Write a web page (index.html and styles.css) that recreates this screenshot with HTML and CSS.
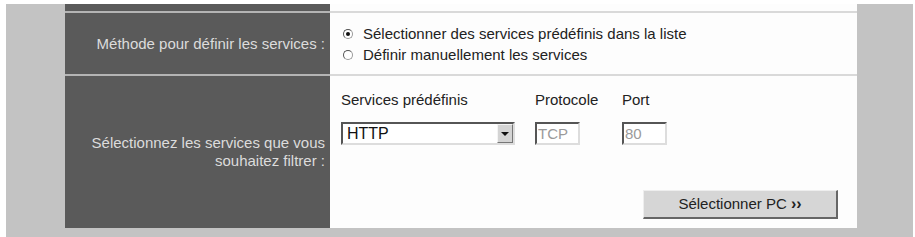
FILE: index.html
```html
<!DOCTYPE html>
<html lang="fr">
<head>
    <meta charset="UTF-8">
    <title>Filtrage des services</title>
    <link rel="stylesheet" href="styles.css">
</head>
<body>
    <div class="page">
        <div class="form">
            <div class="row row-top">
                <div class="lbl"></div>
                <div class="val"></div>
            </div>
            <div class="row row-method">
                <div class="lbl">Méthode pour définir les services :</div>
                <div class="val">
                    <label class="opt"><input type="radio" name="meth" checked> Sélectionner des services prédéfinis dans la liste</label>
                    <label class="opt"><input type="radio" name="meth"> Définir manuellement les services</label>
                </div>
            </div>
            <div class="row row-services">
                <div class="lbl">Sélectionnez les services que vous souhaitez filtrer :</div>
                <div class="val">
                    <div class="fields">
                        <div class="field f-svc">
                            <span class="cap">Services prédéfinis</span>
                            <span class="sel">
                                <select>
                                    <option>HTTP</option>
                                    <option>FTP</option>
                                    <option>SMTP</option>
                                </select>
                                <span class="arrow"></span>
                            </span>
                        </div>
                        <div class="field f-proto">
                            <span class="cap">Protocole</span>
                            <input type="text" class="txt" value="TCP" disabled>
                        </div>
                        <div class="field f-port">
                            <span class="cap">Port</span>
                            <input type="text" class="txt" value="80" disabled>
                        </div>
                    </div>
                    <div class="actions">
                        <button type="button" class="btn">Sélectionner PC <b>››</b></button>
                    </div>
                </div>
            </div>
        </div>
    </div>
</body>
</html>
```

FILE: styles.css
```css
*{
    margin: 0;
    padding: 0;
    box-sizing: border-box;
}
body{
    background: #fff;
    font-family: "Liberation Sans", Arial, sans-serif;
    font-size: 15px;
    color: #222;
}
.page{
    margin: 4px 0 0 6px;
    width: 907px;
    height: 233px;
    background: #c3c3c3;
    padding: 0 56px 0 59px;
}
.row{
    display: grid;
    grid-template-columns: 265px 527px;
}
.lbl{
    background: #5a5a5a;
    color: #dcdcdc;
    text-align: right;
    padding: 0 5px 0 20px;
    display: flex;
    align-items: center;
    justify-content: flex-end;
    line-height: 18px;
    border-bottom: 2px solid #b4b4b4;
}
.val{
    background: #fdfdfd;
    border-bottom: 2px solid #d9d9d9;
}
.row-top{
    height: 9px;
}
.row-method{
    height: 63px;
}
.row-method .val{
    display: flex;
    flex-direction: column;
    justify-content: center;
    padding: 1px 0 0 13px;
}
.opt{
    display: flex;
    align-items: center;
    gap: 10px;
    height: 21px;
}
.opt input{
    appearance: none;
    width: 10px;
    height: 10px;
    border-radius: 50%;
    border: 1px solid #9a9a9a;
    border-top-color: #555;
    border-left-color: #555;
    background: #fff;
    position: relative;
}
.opt input:checked::after{
    content: "";
    position: absolute;
    left: 2px;
    top: 2px;
    width: 4px;
    height: 4px;
    border-radius: 50%;
    background: #111;
}
.row-services{
    height: 152px;
}
.row-services .lbl,
.row-services .val{
    border-bottom: none;
}
.row-services .val{
    padding: 15px 19px 0 11px;
    display: flex;
    flex-direction: column;
}
.fields{
    display: grid;
    grid-template-columns: 194px 87px 60px;
}
.field{
    display: flex;
    flex-direction: column;
    gap: 14px;
}
.cap{
    line-height: 17px;
}
.sel{
    position: relative;
    width: 174px;
    height: 23px;
}
.sel select{
    appearance: none;
    width: 100%;
    height: 100%;
    border: 2px solid #888;
    border-top-color: #555;
    border-left-color: #555;
    border-right-color: #ddd;
    border-bottom-color: #ddd;
    background: #fff;
    font-family: inherit;
    font-size: 16px;
    color: #111;
    padding: 0 0 0 4px;
    outline: none;
}
.arrow{
    position: absolute;
    right: 2px;
    top: 2px;
    width: 16px;
    height: 19px;
    background: #d4d4d4;
    border: 1px solid #f4f4f4;
    border-right-color: #777;
    border-bottom-color: #777;
}
.arrow::after{
    content: "";
    position: absolute;
    left: 3px;
    top: 7px;
    border-left: 4px solid transparent;
    border-right: 4px solid transparent;
    border-top: 4px solid #111;
}
.txt{
    width: 45px;
    height: 23px;
    border: 2px solid #ddd;
    border-top-color: #555;
    border-left-color: #555;
    background: #fff;
    color: #9a9a9a;
    font-family: inherit;
    font-size: 15px;
    padding: 0 0 0 1px;
}
.actions{
    display: flex;
    justify-content: flex-end;
    margin-top: 45px;
}
.btn{
    width: 195px;
    height: 29px;
    background: #d6d6d6;
    border: 1px solid #eee;
    border-right: 2px solid #666;
    border-bottom: 2px solid #666;
    font-family: inherit;
    font-size: 15px;
    color: #222;
}
.btn b{
    font-size: 16px;
}
```
